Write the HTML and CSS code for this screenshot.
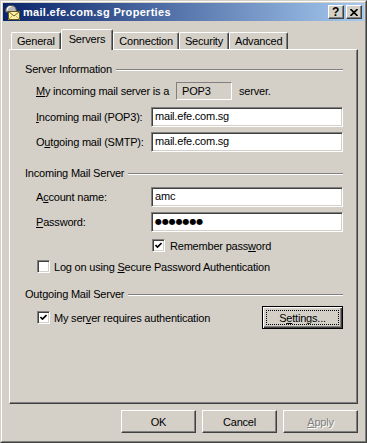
FILE: index.html
```html
<!DOCTYPE html>
<html lang="en">
<head>
  <meta charset="UTF-8">
  <title>mail.efe.com.sg Properties</title>
  <link rel="stylesheet" href="styles.css">
</head>
<body>
  <div class="window">
    <div class="frame">
      <!-- Barra de título -->
      <div class="titlebar">
        <svg class="app-icon" width="16" height="16" viewBox="0 0 16 16">
          <path d="M1.5 8 C1.5 3 4 1.5 7 1.5 C10 1.5 12.5 3 12.5 8 Z" fill="#b8b8b8" stroke="#505050" stroke-width="1"/>
          <path d="M3 6 C3.5 3.5 5 2.5 7 2.5" fill="none" stroke="#fff" stroke-width="1.2"/>
          <rect x="4.5" y="7.5" width="11" height="8" fill="#fdf3a6" stroke="#6a5a20" stroke-width="1"/>
          <path d="M4.5 7.5 L10 12 L15.5 7.5" fill="none" stroke="#6a5a20" stroke-width="1"/>
          <path d="M4.5 15.5 L8.5 11.5 M15.5 15.5 L11.5 11.5" fill="none" stroke="#c8b050" stroke-width="1"/>
        </svg>
        <span class="title">mail.efe.com.sg Properties</span>
        <div class="caption-buttons">
          <span class="cap-btn help">?</span>
          <span class="cap-btn">
            <svg width="8" height="7" viewBox="0 0 8 7">
              <path d="M0.5 0 L7.5 7 M7.5 0 L0.5 7" stroke="#000" stroke-width="1.6"/>
            </svg>
          </span>
        </div>
      </div>

      <div class="content">
        <div class="tabs">
          <div class="tab">General</div>
          <div class="tab active">Servers</div>
          <div class="tab">Connection</div>
          <div class="tab">Security</div>
          <div class="tab">Advanced</div>
        </div>

        <div class="panel">
          <div class="group-title">Server Information</div>
          <div class="group-body">
            <div class="row row-type">
              <span class="type-label"><u>M</u>y incoming mail server is a</span>
              <span class="static-box">POP3</span>
              <span class="type-suffix">server.</span>
            </div>
            <div class="row row-edit first">
              <span class="label"><u>I</u>ncoming mail (POP3):</span>
              <div class="edit">mail.efe.com.sg</div>
            </div>
            <div class="row row-edit">
              <span class="label">O<u>u</u>tgoing mail (SMTP):</span>
              <div class="edit">mail.efe.com.sg</div>
            </div>
          </div>

          <div class="group-title next">Incoming Mail Server</div>
          <div class="group-body">
            <div class="row row-edit first">
              <span class="label">A<u>c</u>count name:</span>
              <div class="edit">amc</div>
            </div>
            <div class="row row-edit">
              <span class="label"><u>P</u>assword:</span>
              <div class="edit dots">●●●●●●●</div>
            </div>
            <div class="row row-check remember">
              <span class="checkbox checked">
                <svg width="7" height="7" viewBox="0 0 7 7"><path d="M0.5 3 L2.5 5 L6.5 1" fill="none" stroke="#000" stroke-width="1.6"/></svg>
              </span>
              <span>Remember pass<u>w</u>ord</span>
            </div>
            <div class="row row-check spa">
              <span class="checkbox"></span>
              <span>Log on using <u>S</u>ecure Password Authentication</span>
            </div>
          </div>

          <div class="group-title next">Outgoing Mail Server</div>
          <div class="group-body">
            <div class="row row-auth">
              <span class="checkbox checked">
                <svg width="7" height="7" viewBox="0 0 7 7"><path d="M0.5 3 L2.5 5 L6.5 1" fill="none" stroke="#000" stroke-width="1.6"/></svg>
              </span>
              <span>My ser<u>v</u>er requires authentication</span>
              <div class="btn btn-default"><span class="focus">S<u>e</u>ttings...</span></div>
            </div>
          </div>
        </div>

        <div class="actions">
          <div class="btn">OK</div>
          <div class="btn">Cancel</div>
          <div class="btn disabled"><u>A</u>pply</div>
        </div>
      </div>
    </div>
  </div>
</body>
</html>
```

FILE: styles.css
```css
/* Reset básico */
* {
  margin: 0;
  padding: 0;
  box-sizing: border-box;
}
body {
  font-family: "Liberation Sans", Arial, sans-serif;
  font-size: 11px;
  letter-spacing: -0.2px;
  color: #000;
  background: #d4d0c8;
}
u {
  text-decoration: underline;
  text-underline-offset: 1px;
}

/* Marco de ventana clásico */
.window {
  width: 367px;
  height: 443px;
  border: 1px solid;
  border-color: #d4d0c8 #404040 #404040 #d4d0c8;
}
.frame {
  height: 100%;
  border: 1px solid;
  border-color: #fff #808080 #808080 #fff;
  padding: 1px;
}
.titlebar {
  height: 18px;
  display: flex;
  align-items: center;
  padding: 0 2px 0 1px;
  background: linear-gradient(to right, #0a246a, #a6caf0);
}
.app-icon {
  flex: none;
}
.title {
  flex: 1;
  margin-left: 3px;
  color: #fff;
  font-weight: bold;
  letter-spacing: 0.3px;
}
.caption-buttons {
  display: flex;
  gap: 2px;
}
.cap-btn {
  width: 16px;
  height: 14px;
  display: flex;
  align-items: center;
  justify-content: center;
  background: #d4d0c8;
  border: 1px solid;
  border-color: #fff #404040 #404040 #fff;
  box-shadow: inset -1px -1px #808080;
}
.cap-btn.help {
  font-weight: bold;
  font-size: 12px;
  line-height: 12px;
  padding-right: 1px;
}

/* Pestañas */
.content {
  padding: 8px 6px 0;
}
.tabs {
  display: flex;
  align-items: flex-end;
  height: 20px;
  padding-left: 2px;
}
.tab {
  height: 17px;
  padding: 2px 5px 0;
  line-height: 13px;
  border-top: 1px solid #fff;
  border-left: 1px solid #fff;
  border-right: 1px solid #404040;
  border-radius: 2px 2px 0 0;
  box-shadow: inset -1px 0 #808080;
}
.tab.active {
  height: 21px;
  margin-bottom: -1px;
  padding: 3px 7px 0;
  position: relative;
  z-index: 1;
  background: #d4d0c8;
}

/* Panel */
.panel {
  height: 355px;
  padding: 13px 14px 0 15px;
  border: 1px solid;
  border-color: #fff #404040 #404040 #fff;
  box-shadow: inset -1px -1px #808080;
}
.group-title {
  display: flex;
  align-items: center;
  height: 13px;
  line-height: 13px;
}
.group-title::after {
  content: "";
  flex: 1;
  margin-left: 4px;
  border-top: 1px solid #808080;
  border-bottom: 1px solid #fff;
}
.group-title.next {
  margin-top: 15px;
}
.group-body {
  padding-left: 11px;
}
.row {
  display: flex;
  align-items: center;
}
.row-type {
  height: 18px;
  margin-top: 6px;
}
.type-label {
  width: 140px;
}
.static-box {
  width: 56px;
  height: 18px;
  padding-left: 5px;
  line-height: 16px;
  border: 1px solid;
  border-color: #808080 #fff #fff #808080;
}
.type-suffix {
  margin-left: 7px;
}
.row-edit {
  height: 20px;
  margin-top: 5px;
}
.row-edit.first {
  margin-top: 7px;
}
.label {
  width: 115px;
  flex: none;
}
.edit {
  flex: 1;
  height: 20px;
  padding-left: 3px;
  line-height: 17px;
  background: #fff;
  border: 1px solid;
  border-color: #808080 #fff #fff #808080;
  box-shadow: inset 1px 1px #404040, inset -1px -1px #d4d0c8;
}
.edit.dots {
  font-family: "DejaVu Sans", sans-serif;
  font-size: 8px;
  letter-spacing: -0.1px;
  line-height: 17px;
}

/* Casillas */
.checkbox {
  width: 13px;
  height: 13px;
  flex: none;
  display: flex;
  align-items: center;
  justify-content: center;
  background: #fff;
  border: 1px solid;
  border-color: #808080 #fff #fff #808080;
  box-shadow: inset 1px 1px #404040, inset -1px -1px #d4d0c8;
}
.row-check {
  height: 13px;
  gap: 5px;
}
.row-check.remember {
  margin-top: 7px;
  padding-left: 116px;
}
.row-check.spa {
  margin-top: 8px;
  padding-left: 1px;
  gap: 4px;
}
.row-auth {
  height: 23px;
  margin-top: 5px;
  padding-left: 1px;
  gap: 4px;
}

/* Botones */
.btn {
  width: 75px;
  height: 23px;
  display: flex;
  align-items: center;
  justify-content: center;
  background: #d4d0c8;
  border: 1px solid;
  border-color: #fff #404040 #404040 #fff;
  box-shadow: inset -1px -1px #808080;
}
.btn.disabled {
  color: #808080;
  text-shadow: 1px 1px #fff;
}
.btn-default {
  width: 81px;
  margin-left: auto;
  padding: 3px;
  border: 1px solid #000;
  box-shadow: inset 1px 1px #fff, inset -1px -1px #404040, inset -2px -2px #808080;
}
.focus {
  flex: 1;
  height: 100%;
  display: flex;
  align-items: center;
  justify-content: center;
  border: 1px dotted #000;
}
.actions {
  display: flex;
  justify-content: flex-end;
  gap: 6px;
  margin-top: 6px;
}
```
